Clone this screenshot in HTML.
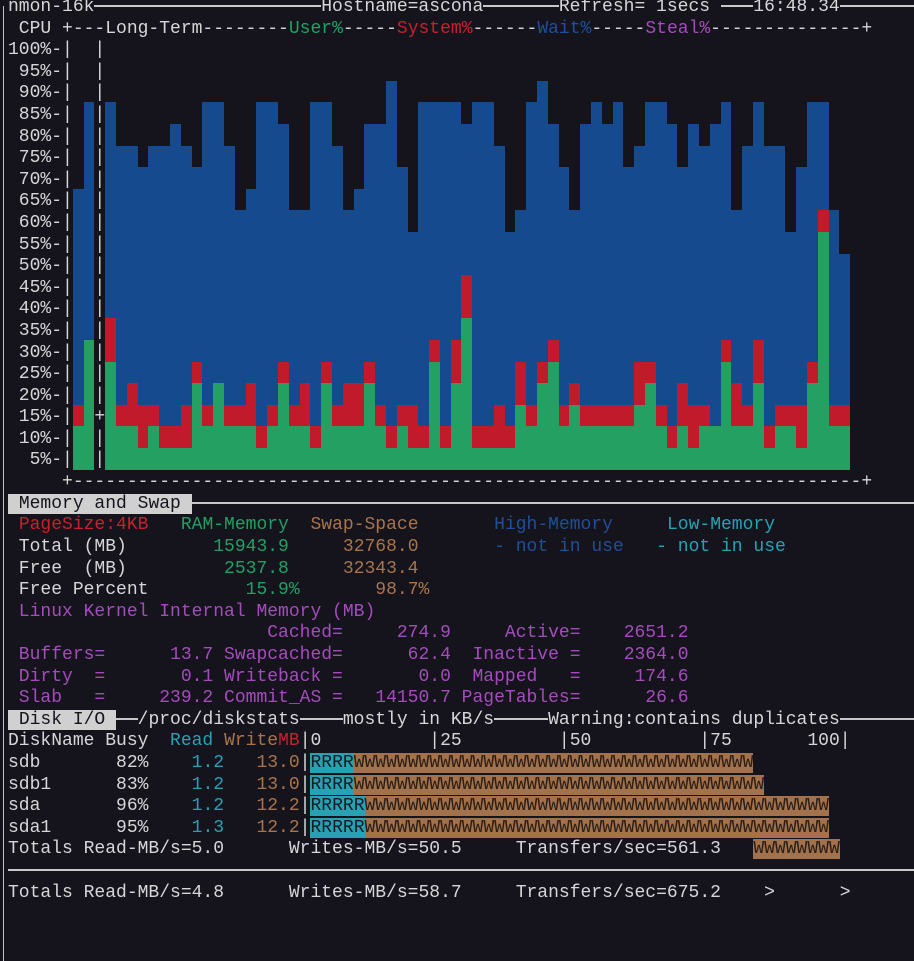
<!DOCTYPE html>
<html><head><meta charset="utf-8"><style>
html,body{margin:0;padding:0;background:#15141d;width:914px;height:961px;overflow:hidden;position:relative}
.r{position:absolute;left:-2.8px;white-space:pre;font-family:"Liberation Mono","DejaVu Sans Mono",monospace;font-size:18px;line-height:21.6px;height:21.6px;color:#d6d6d6;z-index:2}
pre.r{margin:0;height:auto}
.h{display:inline-block;height:2px;background:#c8c8c8;vertical-align:middle}
.g{color:#22a062}.rd{color:#c8202c}.b{color:#1f4f98}.p{color:#a44cbb}.br{color:#a8744c}.cy{color:#27a2b4}
.box{background:#d0d0d0;color:#15141d}
.R{background:#27a2b4;color:#1a1a22}.W{background:#a3714a;color:#2a1e16}
.bd{position:absolute;left:2.5px;top:6px;width:1.6px;height:956px;background:#c0c0c0;z-index:3}
.ch{position:absolute;left:72.8px;top:0;height:469.6px;display:flex;align-items:flex-end;z-index:1}
.ch i{display:block;width:10.8px;height:calc(var(--t)*21.6px);background:#164a8f;position:relative}
.ch i::before{content:"";position:absolute;left:0;right:0;bottom:0;height:calc(var(--u)*21.6px);background:#24a062}
.ch i::after{content:"";position:absolute;left:0;right:0;bottom:calc(var(--u)*21.6px);height:calc(var(--s)*21.6px);background:#c11b2b}
</style></head><body>
<div class="bd"></div>
<div class="r" style="top:-3px"> nmon-16k<span class="h" style="width:226.8px"></span>Hostname=ascona<span class="h" style="width:75.6px"></span>Refresh= 1secs <span class="h" style="width:32.4px"></span>16:48.34<span class="h" style="width:120px"></span></div>
<pre class="r" style="top:18.6px">  CPU +---Long-Term--------<span class="g">User%</span>-----<span class="rd">System%</span>------<span class="b">Wait%</span>-----<span class="p">Steal%</span>--------------+
 100%-|  |
  95%-|  |
  90%-|  |
  85%-|  |
  80%-|  |
  75%-|  |
  70%-|  |
  65%-|  |
  60%-|  |
  55%-|  |
  50%-|  |
  45%-|  |
  40%-|  |
  35%-|  |
  30%-|  |
  25%-|  |
  20%-|  |
  15%-|  +
  10%-|  |
   5%-|  |
      +-------------------------------------------------------------------------+</pre>
<div class="ch">
<i style="--u:2;--s:1;--t:13"></i><i style="--u:6;--s:0;--t:17"></i><i style="--u:0;--s:0;--t:0"></i>
<i style="--u:5;--s:2;--t:17"></i><i style="--u:2;--s:1;--t:15"></i><i style="--u:2;--s:2;--t:15"></i><i style="--u:1;--s:2;--t:14"></i><i style="--u:2;--s:1;--t:15"></i>
<i style="--u:1;--s:1;--t:15"></i><i style="--u:1;--s:1;--t:16"></i><i style="--u:1;--s:2;--t:15"></i><i style="--u:4;--s:1;--t:14"></i><i style="--u:2;--s:1;--t:17"></i>
<i style="--u:4;--s:0;--t:17"></i><i style="--u:2;--s:1;--t:15"></i><i style="--u:2;--s:1;--t:12"></i><i style="--u:2;--s:2;--t:13"></i><i style="--u:1;--s:1;--t:17"></i>
<i style="--u:2;--s:1;--t:17"></i><i style="--u:4;--s:1;--t:16"></i><i style="--u:2;--s:1;--t:12"></i><i style="--u:2;--s:2;--t:12"></i><i style="--u:1;--s:1;--t:17"></i>
<i style="--u:4;--s:1;--t:17"></i><i style="--u:2;--s:1;--t:15"></i><i style="--u:2;--s:2;--t:12"></i><i style="--u:2;--s:2;--t:13"></i><i style="--u:4;--s:1;--t:16"></i>
<i style="--u:2;--s:1;--t:16"></i><i style="--u:1;--s:1;--t:18"></i><i style="--u:2;--s:1;--t:14"></i><i style="--u:1;--s:2;--t:11"></i><i style="--u:1;--s:1;--t:17"></i>
<i style="--u:5;--s:1;--t:17"></i><i style="--u:1;--s:1;--t:17"></i><i style="--u:4;--s:2;--t:17"></i><i style="--u:7;--s:2;--t:16"></i><i style="--u:1;--s:1;--t:17"></i>
<i style="--u:1;--s:1;--t:17"></i><i style="--u:1;--s:2;--t:15"></i><i style="--u:1;--s:1;--t:11"></i><i style="--u:3;--s:2;--t:12"></i><i style="--u:2;--s:1;--t:17"></i>
<i style="--u:4;--s:1;--t:18"></i><i style="--u:5;--s:1;--t:16"></i><i style="--u:2;--s:1;--t:14"></i><i style="--u:3;--s:1;--t:12"></i><i style="--u:2;--s:1;--t:16"></i>
<i style="--u:2;--s:1;--t:17"></i><i style="--u:2;--s:1;--t:16"></i><i style="--u:2;--s:1;--t:17"></i><i style="--u:2;--s:1;--t:14"></i><i style="--u:3;--s:2;--t:15"></i>
<i style="--u:4;--s:1;--t:17"></i><i style="--u:2;--s:1;--t:17"></i><i style="--u:1;--s:1;--t:16"></i><i style="--u:2;--s:2;--t:14"></i><i style="--u:1;--s:2;--t:16"></i>
<i style="--u:2;--s:1;--t:15"></i><i style="--u:2;--s:0;--t:16"></i><i style="--u:5;--s:1;--t:17"></i><i style="--u:2;--s:2;--t:12"></i><i style="--u:2;--s:1;--t:15"></i>
<i style="--u:4;--s:2;--t:17"></i><i style="--u:1;--s:1;--t:15"></i><i style="--u:2;--s:1;--t:15"></i><i style="--u:2;--s:1;--t:11"></i><i style="--u:1;--s:2;--t:14"></i>
<i style="--u:4;--s:1;--t:17"></i><i style="--u:11;--s:1;--t:17"></i><i style="--u:2;--s:1;--t:12"></i><i style="--u:2;--s:1;--t:10"></i>
</div>
<div class="r" style="top:493.8px"> <span class="box"> Memory and Swap </span><span class="h" style="width:760px"></span></div>
<div class="r" style="top:515.4px">  <span class="rd">PageSize:4KB</span>   <span class="g">RAM-Memory</span>  <span class="br">Swap-Space</span>       <span class="b">High-Memory</span>     <span class="cy">Low-Memory</span></div>
<div class="r" style="top:537px">  Total (MB)        <span class="g">15943.9</span>     <span class="br">32768.0</span>       <span class="b">- not in use</span>   <span class="cy">- not in use</span></div>
<div class="r" style="top:558.6px">  Free  (MB)         <span class="g">2537.8</span>     <span class="br">32343.4</span></div>
<div class="r" style="top:580.2px">  Free Percent         <span class="g">15.9%</span>       <span class="br">98.7%</span></div>
<div class="r p" style="top:601.8px">  Linux Kernel Internal Memory (MB)</div>
<div class="r p" style="top:623.4px">                         Cached=     274.9     Active=    2651.2</div>
<div class="r p" style="top:645px">  Buffers=      13.7 Swapcached=      62.4  Inactive =    2364.0</div>
<div class="r p" style="top:666.6px">  Dirty  =       0.1 Writeback =       0.0  Mapped   =     174.6</div>
<div class="r p" style="top:688.2px">  Slab   =     239.2 Commit_AS =   14150.7 PageTables=      26.6</div>
<div class="r" style="top:709.8px"> <span class="box"> Disk I/O </span><span class="h" style="width:21.6px"></span>/proc/diskstats<span class="h" style="width:43.2px"></span>mostly in KB/s<span class="h" style="width:54px"></span>Warning:contains duplicates<span class="h" style="width:100px"></span></div>
<div class="r" style="top:731.4px"> DiskName Busy  <span class="cy">Read</span> <span class="br">Write</span><span class="rd">MB</span>|0          |25         |50          |75       100|</div>
<div class="r" style="top:753px"> sdb       82%    <span class="cy">1.2</span>   <span class="br">13.0</span>|<span class="R">RRRR</span><span class="W">WWWWWWWWWWWWWWWWWWWWWWWWWWWWWWWWWWWWW</span></div>
<div class="r" style="top:774.6px"> sdb1      83%    <span class="cy">1.2</span>   <span class="br">13.0</span>|<span class="R">RRRR</span><span class="W">WWWWWWWWWWWWWWWWWWWWWWWWWWWWWWWWWWWWWW</span></div>
<div class="r" style="top:796.2px"> sda       96%    <span class="cy">1.2</span>   <span class="br">12.2</span>|<span class="R">RRRRR</span><span class="W">WWWWWWWWWWWWWWWWWWWWWWWWWWWWWWWWWWWWWWWWWWW</span></div>
<div class="r" style="top:817.8px"> sda1      95%    <span class="cy">1.3</span>   <span class="br">12.2</span>|<span class="R">RRRRR</span><span class="W">WWWWWWWWWWWWWWWWWWWWWWWWWWWWWWWWWWWWWWWWWWW</span></div>
<div class="r" style="top:839.4px"> Totals Read-MB/s=5.0      Writes-MB/s=50.5     Transfers/sec=561.3   <span class="W">WWWWWWWW</span></div>
<div class="r" style="top:861px"> <span class="h" style="width:920px"></span></div>
<div class="r" style="top:882.6px"> Totals Read-MB/s=4.8      Writes-MB/s=58.7     Transfers/sec=675.2    &gt;      &gt;</div>
</body></html>
